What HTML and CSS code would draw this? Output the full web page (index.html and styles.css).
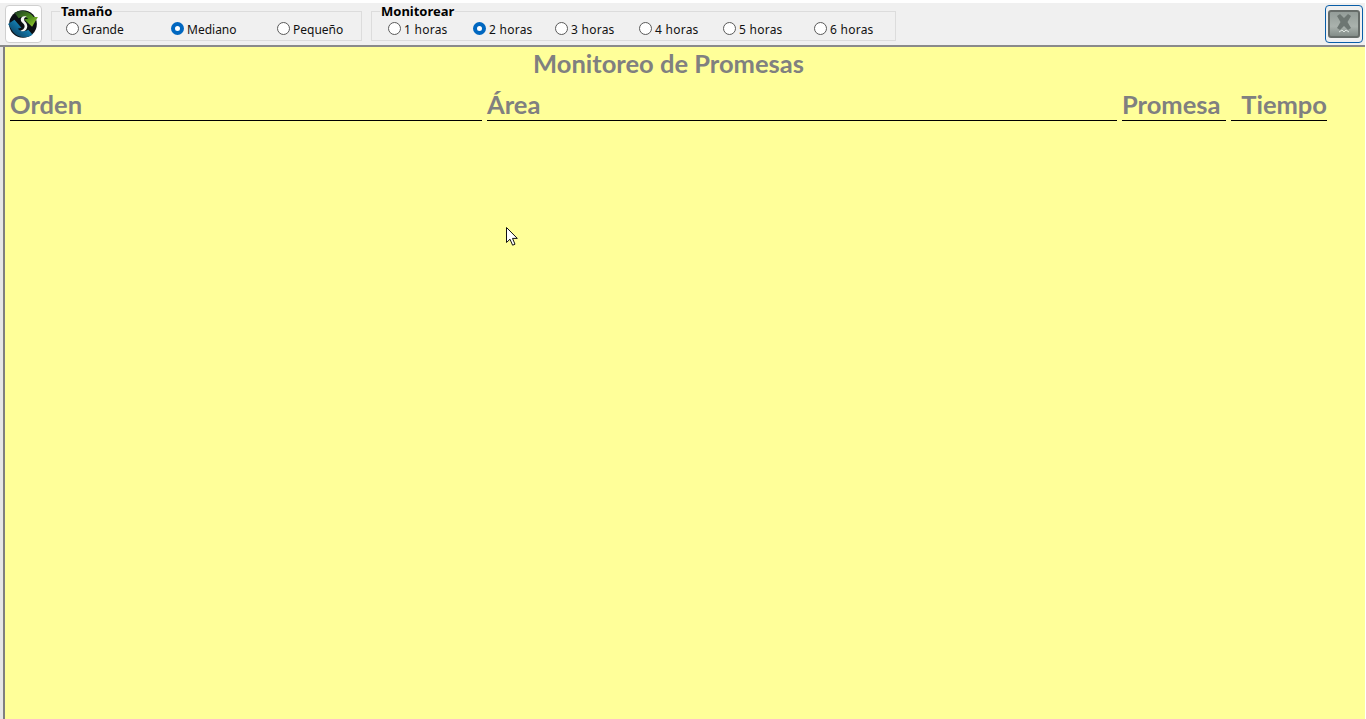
FILE: index.html
```html
<!DOCTYPE html>
<html lang="es">
<head>
<meta charset="utf-8">
<title>Monitoreo de Promesas</title>
<link rel="stylesheet" href="styles.css">
</head>
<body>
<div class="window">
  <header class="toolbar">
    <button class="logo-btn" type="button" aria-label="Actualizar">
      <svg width="32" height="32" viewBox="0 0 30 30">
        <defs>
          <linearGradient id="g1" x1="0" y1="0" x2="1" y2="1"><stop offset="0" stop-color="#1c3a24"/><stop offset="0.55" stop-color="#4f8f1e"/><stop offset="1" stop-color="#a4d233"/></linearGradient>
          <linearGradient id="g2" x1="0" y1="1" x2="1" y2="0"><stop offset="0" stop-color="#0f2d44"/><stop offset="0.5" stop-color="#0f6d9c"/><stop offset="1" stop-color="#37b3e0"/></linearGradient>
        </defs>
        <circle cx="15" cy="15" r="13" fill="#0b0f14"/>
        <path d="M7 4.5A13.5 13.5 0 0 1 25 8.5L29 8.5 23.5 17.5 16 10.5 20 10A8 8 0 0 0 11 9.5Z" fill="url(#g1)"/>
        <path d="M1 15L7 11 13.5 18.5 10 19.5A8 8 0 0 0 20 20.5L24 25A13.5 13.5 0 0 1 5 21.5Z" fill="url(#g2)"/>
        <path d="M18.5 8C15.5 7 12.5 8.5 13 11.5 13.5 14 16.5 14.5 16.5 17 16.5 19.5 14 21 12.5 21 15 23 19 21 19 17 19 13.5 16 13 16 10.5 16 9 17.5 8.5 18.5 8Z" fill="#f4f6f4"/>
      </svg>
    </button>
    <fieldset class="group group-size">
      <legend>Tamaño</legend>
      <div class="options">
        <label class="opt w-105"><span class="radio"></span>Grande</label>
        <label class="opt w-106"><span class="radio on"></span>Mediano</label>
        <label class="opt"><span class="radio"></span>Pequeño</label>
      </div>
    </fieldset>
    <fieldset class="group group-hours">
      <legend>Monitorear</legend>
      <div class="options">
        <label class="opt w-85"><span class="radio"></span>1 horas</label>
        <label class="opt w-82"><span class="radio on"></span>2 horas</label>
        <label class="opt w-84"><span class="radio"></span>3 horas</label>
        <label class="opt w-84"><span class="radio"></span>4 horas</label>
        <label class="opt w-91"><span class="radio"></span>5 horas</label>
        <label class="opt"><span class="radio"></span>6 horas</label>
      </div>
    </fieldset>
    <button class="close-btn" type="button" aria-label="Cerrar">
      <span class="close-face">
        <svg width="28" height="24" viewBox="0 0 28 24">
          <path d="M7 4L10 2 14 6 18 2 21 4 17.5 10 21 16 18 18 14 14 10 18 7 16 10.5 10Z" fill="#6d7672"/>
          <path d="M9 20L12 18 14 20 16 18 19 20" fill="none" stroke="#dfe5e0" stroke-width="1"/>
        </svg>
      </span>
    </button>
  </header>
  <div class="content">
    <main class="panel">
      <div class="board">
        <h1 class="title">Monitoreo de Promesas</h1>
        <div class="heads">
          <div class="head">Orden</div>
          <div class="head">Área</div>
          <div class="head">Promesa</div>
          <div class="head head-right">Tiempo</div>
        </div>
      </div>
      <svg class="cursor" width="14" height="21" viewBox="0 0 14 21">
        <path d="M1.5 1.5V16.5L5 13.2 7.6 19.2 10 18.2 7.5 12.4H12.3Z" fill="#fff" stroke="#111" stroke-width="1"/>
      </svg>
    </main>
  </div>
</div>
</body>
</html>
```
FILE: styles.css
```css
* { box-sizing: border-box; }
html, body { margin: 0; height: 100%; overflow: hidden; background: #fff; }
.window {
  height: 719px;
  padding: 3px 1px 0 0;
  display: flex;
  flex-direction: column;
}
.toolbar {
  height: 44px;
  background: #f0f0f0;
  display: flex;
  align-items: flex-start;
  flex: none;
  border-bottom: 2px solid #8a8a8a;
  color: #000;
}
.logo-btn {
  width: 37px;
  height: 38px;
  margin: 2px 0 0 5px;
  padding: 0 2px 0 0;
  background: #fff;
  border: 1px solid #d0d0d0;
  border-radius: 4px;
  display: flex;
  align-items: center;
  justify-content: center;
}
.group {
  margin: 0;
  height: 36px;
  padding: 0 0 0 14px;
  border: 1px solid #dcdcdc;
  position: relative;
  top: 2px;
  min-width: 0;
}
.group legend {
  padding: 0 1px;
  margin-left: -6px;
  font-family: "Noto Sans", sans-serif;
  font-size: 13px;
  font-weight: 700;
  line-height: 12px;
  height: 12px;
  color: #000;
}
.group-size { width: 311px; margin-left: 9px; }
.group-hours { width: 525px; margin-left: 9px; padding-left: 16px; }
.group-hours legend { margin-left: -8px; }
.group-hours .opt { letter-spacing: 0.25px; }
.options { display: flex; align-items: center; height: 18px; margin-top: 4px; }
.opt {
  display: flex;
  align-items: center;
  gap: 3px;
  font-family: "Noto Sans", sans-serif;
  font-size: 12px;
  line-height: 16px;
  color: #111;
  white-space: nowrap;
}
.w-105 { width: 105px; }
.w-106 { width: 106px; }
.w-85 { width: 85px; }
.w-82 { width: 82px; }
.w-84 { width: 84px; }
.w-91 { width: 91px; }
.radio {
  width: 13px;
  height: 13px;
  margin-bottom: 3px;
  border: 1px solid #5a5a5a;
  border-radius: 50%;
  background: #fff;
  flex: none;
}
.radio.on {
  border: 4px solid #0067c0;
  background: #fff;
}
.close-btn {
  width: 38px;
  height: 38px;
  margin: 2px 2px 0 auto;
  padding: 0;
  background: #f0f0f0;
  border: 1px solid #0a5ea8;
  border-radius: 4px;
  display: flex;
  align-items: center;
  justify-content: center;
}
.close-face {
  width: 32px;
  height: 28px;
  border-radius: 3px;
  background: linear-gradient(#949d99, #aab2ad 60%, #838c88);
  border: 2px solid #666c69;
  display: flex;
  align-items: center;
  justify-content: center;
}
.content {
  flex: 1;
  display: flex;
  padding-left: 3px;
  background: #e6e6e6;
}
.panel {
  flex: 1;
  position: relative;
  background: #ffff99;
  border-left: 2px solid #7f7f80;
  padding: 0 0 0 5px;
}
.board { width: 1317px; }
.title {
  margin: 0;
  padding-top: 1px;
  height: 39px;
  text-align: center;
  font-family: Lato, "Open Sans", sans-serif;
  font-size: 25.5px;
  line-height: 30px;
  font-weight: 700;
  color: #808080;
}
.heads {
  display: grid;
  grid-template-columns: 472px 630px 104px 96px;
  column-gap: 5px;
}
.head {
  height: 35px;
  border-bottom: 1px solid #000;
  font-family: Lato, "Open Sans", sans-serif;
  font-size: 25.5px;
  line-height: 36px;
  font-weight: 700;
  color: #808080;
  white-space: nowrap;
}
.head-right { text-align: right; }
.cursor { position: absolute; left: 500px; top: 179px; }
```
